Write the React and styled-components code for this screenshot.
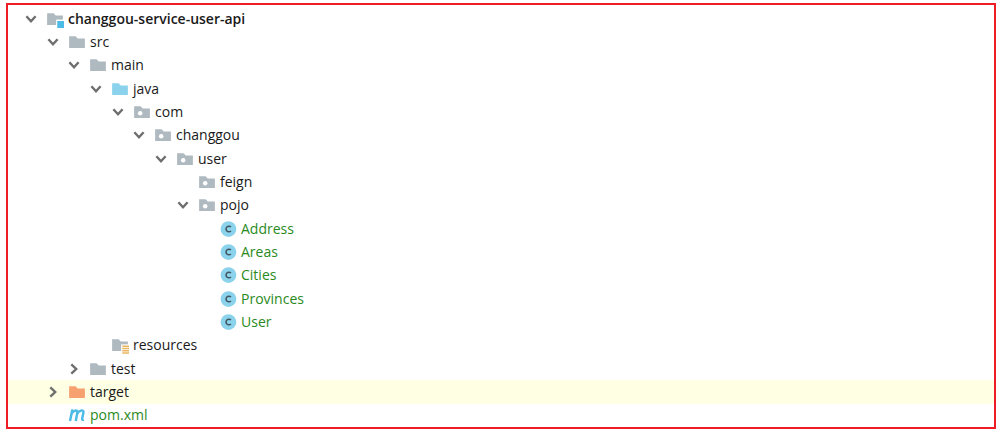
import { useState } from "react";
import styled, { createGlobalStyle } from "styled-components";

const GlobalStyle = createGlobalStyle`
  * {
    box-sizing: border-box;
  }

  body {
    margin: 0;
    background: #fff;
    font-family: "Open Sans", "Noto Sans", sans-serif;
  }
`;

const Page = styled.main`
  display: flex;
  min-height: 100vh;
  padding: 3px 7px 6px 6px;
`;

const Tree = styled.ul`
  flex: 1;
  display: flex;
  flex-direction: column;
  margin: 0;
  padding: 2px 0 0;
  border: 2px solid #ee1c25;
  list-style: none;
`;

// three levels of the tree take 65px
const Row = styled.li`
  flex: 1 0 23px;
  max-height: 24px;
  display: flex;
  align-items: center;
  padding-left: ${({ $depth }) => 16 + Math.round(($depth * 65) / 3)}px;
  background: ${({ $selected }) => ($selected ? "#ffffe4" : "transparent")};
`;

const Toggle = styled.button`
  display: flex;
  width: 14px;
  height: 14px;
  padding: 0;
  border: 0;
  background: none;
  cursor: pointer;

  svg {
    transform: ${({ $open }) => ($open ? "none" : "rotate(-90deg)")};
  }
`;

const Spacer = styled.span`
  width: 14px;
`;

const Icon = styled.svg`
  flex: none;
  width: 18px;
  height: 18px;
  margin: 0 4px 0 8px;
`;

const Label = styled.span`
  color: ${({ $color }) => $color || "#1a1a1a"};
  font-size: 14px;
  font-weight: ${({ $strong }) => ($strong ? 600 : 400)};
  line-height: 22px;
  white-space: nowrap;
`;

const GREY = "#afb9c0";
const GREEN = "#2a8a22";

function Folder({ color = GREY, children }) {
  return (
    <Icon viewBox="0 0 16 16" aria-hidden="true">
      <path fill={color} d="M1 13.4V2.8h5.2c.4 0 .6.1.8.3L8.6 4.8H15v8.6z" />
      {children}
    </Icon>
  );
}

function NodeIcon({ type }) {
  switch (type) {
    case "module":
      return (
        <Folder>
          <path fill="#fff" d="M9 8.5h7V16H9z" />
          <path fill="#4dbbe6" d="M10 9.8h6V16h-6z" />
        </Folder>
      );
    case "source":
      return <Folder color="#8bd3ec" />;
    case "excluded":
      return <Folder color="#f6a16f" />;
    case "package":
      return (
        <Folder>
          <circle cx="6.4" cy="9.2" r="2" fill="#fff" />
        </Folder>
      );
    case "resources":
      return (
        <Folder>
          <path fill="#fff" d="M9 7.4h7V16H9z" />
          <path
            fill="#e8b661"
            d="M10 8.4h6v1.4h-6zM10 10.4h6v1.4h-6zM10 12.4h6v1.4h-6zM10 14.4h6v1.4h-6z"
          />
        </Folder>
      );
    case "class":
      return (
        <Icon viewBox="0 0 16 16" aria-hidden="true">
          <circle cx="8.4" cy="8" r="7" fill="#8bd3ec" />
          <path
            fill="none"
            stroke="#40555f"
            strokeWidth="1.4"
            d="M10.6 6.3A2.5 2.5 0 1 0 10.6 9.7"
          />
        </Icon>
      );
    case "maven":
      return (
        <Icon viewBox="0 0 16 16" aria-hidden="true">
          <path
            fill="none"
            stroke="#4dbbe6"
            strokeWidth="2.2"
            d="M1.8 13.4L3.9 3M3 7.5C4.2 4 8.9 2.4 8.3 6L6.9 13.4M8 7.5C9.2 4 14.4 2.4 13.7 6L12.6 11.2C12.4 12.3 13 12.5 14 12.2"
          />
        </Icon>
      );
    default:
      return <Folder />;
  }
}

const project = {
  name: "changgou-service-user-api",
  type: "module",
  open: true,
  children: [
    {
      name: "src",
      open: true,
      children: [
        {
          name: "main",
          open: true,
          children: [
            {
              name: "java",
              type: "source",
              open: true,
              children: [
                {
                  name: "com",
                  type: "package",
                  open: true,
                  children: [
                    {
                      name: "changgou",
                      type: "package",
                      open: true,
                      children: [
                        {
                          name: "user",
                          type: "package",
                          open: true,
                          children: [
                            { name: "feign", type: "package" },
                            {
                              name: "pojo",
                              type: "package",
                              open: true,
                              children: [
                                { name: "Address", type: "class" },
                                { name: "Areas", type: "class" },
                                { name: "Cities", type: "class" },
                                { name: "Provinces", type: "class" },
                                { name: "User", type: "class" },
                              ],
                            },
                          ],
                        },
                      ],
                    },
                  ],
                },
              ],
            },
            { name: "resources", type: "resources" },
          ],
        },
        { name: "test", children: [] },
      ],
    },
    { name: "target", type: "excluded", selected: true, children: [] },
    { name: "pom.xml", type: "maven" },
  ],
};

function TreeNode({ node, depth = 0 }) {
  const [open, setOpen] = useState(Boolean(node.open));
  const isNew = node.type === "class" || node.type === "maven";

  return (
    <>
      <Row $depth={depth} $selected={node.selected}>
        {node.children ? (
          <Toggle
            type="button"
            $open={open}
            aria-expanded={open}
            aria-label={node.name}
            onClick={() => setOpen(!open)}
          >
            <svg width="14" height="14" viewBox="0 0 14 14">
              <path
                d="M2.4 4.3L7 9.2L11.6 4.3"
                fill="none"
                stroke="#6e6e6e"
                strokeWidth="2.4"
              />
            </svg>
          </Toggle>
        ) : (
          <Spacer />
        )}
        <NodeIcon type={node.type} />
        <Label
          $color={isNew ? GREEN : undefined}
          $strong={node.type === "module"}
        >
          {node.name}
        </Label>
      </Row>
      {open &&
        node.children?.map((child) => (
          <TreeNode key={child.name} node={child} depth={depth + 1} />
        ))}
    </>
  );
}

function App() {
  return (
    <>
      <GlobalStyle />
      <Page>
        <Tree>
          <TreeNode node={project} />
        </Tree>
      </Page>
    </>
  );
}

export default App;
